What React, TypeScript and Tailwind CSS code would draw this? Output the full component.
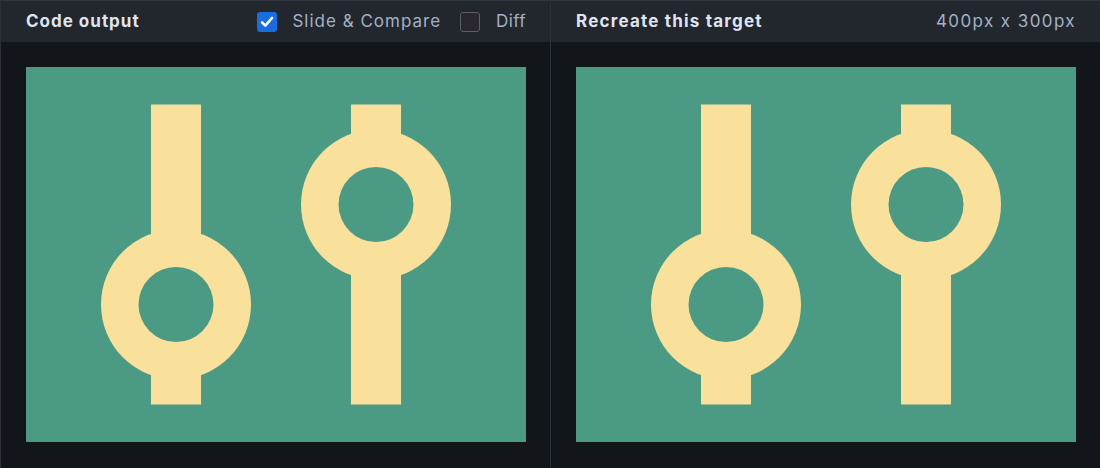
import React from "react";

function Target() {
  return (
    <svg width="500" height="375" viewBox="0 0 400 300" className="block">
      <rect width="400" height="300" fill="#4b9a84" />
      <rect x="100" y="30" width="40" height="240" fill="#f9e09b" />
      <circle cx="120" cy="190" r="60" fill="#f9e09b" />
      <circle cx="120" cy="190" r="30" fill="#4b9a84" />
      <rect x="260" y="30" width="40" height="240" fill="#f9e09b" />
      <circle cx="280" cy="110" r="60" fill="#f9e09b" />
      <circle cx="280" cy="110" r="30" fill="#4b9a84" />
    </svg>
  );
}

export default function App() {
  return (
    <div className="flex h-[468px] w-[1100px] bg-[#121519]">
      <div className="flex w-[550px] flex-col border-l border-[#2a313b]">
        <div className="flex h-[42px] items-center justify-between border-t border-[#2f3640] bg-[#22262d] pl-[25px] pr-[24px] pt-[1px] font-['Inter',sans-serif]">
          <span className="text-[17px] font-bold tracking-[1px] text-[#dfe5ee]">Code output</span>
          <div className="flex items-center">
            <span className="flex h-[20px] w-[20px] items-center justify-center rounded-[3px] bg-[#1a6de0]">
              <svg width="16" height="16" viewBox="0 0 24 24" fill="none" stroke="#ffffff" strokeWidth="4" strokeLinecap="round" strokeLinejoin="round">
                <path d="M4.5 12.5l5 5L19.5 6" />
              </svg>
            </span>
            <span className="ml-[15px] text-[17px] tracking-[1px] text-[#a3b1c6]">Slide &amp; Compare</span>
            <span className="ml-[19px] h-[20px] w-[20px] rounded-[3px] border border-[#5a5f68] bg-[#2a2730]" />
            <span className="ml-[16px] text-[17px] tracking-[0.4px] text-[#a3b1c6]">Diff</span>
          </div>
        </div>
        <div className="flex flex-1 justify-center pt-[25px]">
          <Target />
        </div>
      </div>
      <div className="flex w-[550px] flex-col border-l border-[#2a313b]">
        <div className="flex h-[42px] items-center justify-between border-t border-[#2f3640] bg-[#22262d] pl-[25px] pr-[24px] pt-[1px] font-['Inter',sans-serif]">
          <span className="text-[17px] font-bold tracking-[1.2px] text-[#dfe5ee]">Recreate this target</span>
          <span className="text-[17px] tracking-[1.4px] text-[#a3b1c6]">400px x 300px</span>
        </div>
        <div className="flex flex-1 justify-center pt-[25px]">
          <Target />
        </div>
      </div>
    </div>
  );
}
